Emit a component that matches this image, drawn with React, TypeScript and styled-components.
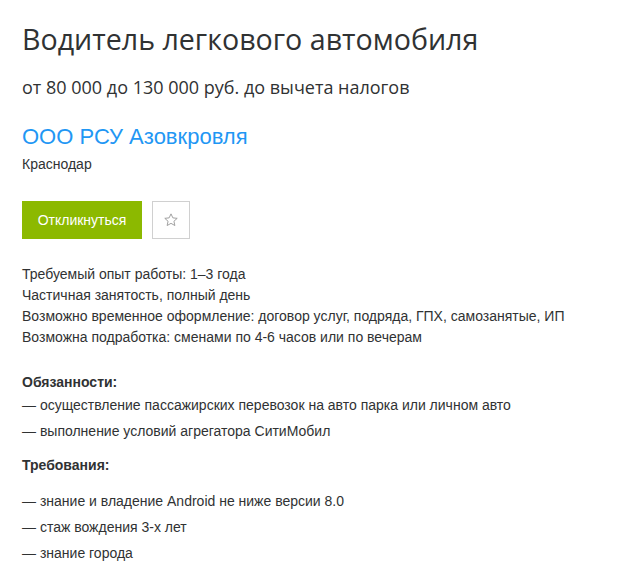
import React from "react";
import styled, { createGlobalStyle } from "styled-components";

const Global = createGlobalStyle`
  html, body { margin: 0; padding: 0; background: #fff; }
  body { font-family: "Liberation Sans", Arial, sans-serif; color: #303233; }
`;

const Page = styled.div`
  padding: 20px 22px 0 22px;
  display: flex;
  flex-direction: column;
  align-items: flex-start;
`;

const Title = styled.h1`
  margin: 0;
  font-family: "Open Sans", sans-serif;
  font-weight: 400;
  font-size: 28.6px;
  line-height: 38px;
  color: #303233;
`;

const Salary = styled.div`
  margin-top: 17px;
  font-family: "Open Sans", sans-serif;
  font-size: 18px;
  line-height: 24px;
  color: #303233;
`;

const Company = styled.a`
  margin-top: 24px;
  font-family: "Liberation Sans", Arial, sans-serif;
  font-size: 22px;
  line-height: 28px;
  color: #1f97f4;
  text-decoration: none;
`;

const City = styled.div`
  margin-top: 3px;
  font-size: 14px;
  line-height: 20px;
  color: #303233;
`;

const Actions = styled.div`
  margin-top: 27px;
  display: flex;
  gap: 10px;
`;

const RespondButton = styled.button`
  height: 38px;
  width: 120px;
  border: none;
  background: #8cb900;
  color: #fff;
  font-family: "Liberation Sans", Arial, sans-serif;
  font-size: 14px;
  padding: 0;
  cursor: pointer;
`;

const StarButton = styled.button`
  width: 38px;
  height: 38px;
  box-sizing: border-box;
  border: 1px solid #d0d0d0;
  background: #fff;
  display: flex;
  align-items: center;
  justify-content: center;
  padding: 0;
`;

const Info = styled.div`
  margin-top: 25px;
  font-size: 14px;
  line-height: 21px;
  color: #303233;
`;

const Description = styled.div`
  margin-top: 25px;
  font-size: 14px;
  color: #303233;
  display: flex;
  flex-direction: column;
  gap: 12px;
`;

const SectionTitle = styled.div<{ $gap: number }>`
  font-weight: bold;
  line-height: 19px;
  margin-bottom: ${(p) => p.$gap}px;
`;

const Item = styled.div`
  line-height: 26px;
`;

const Section = styled.div``;

const Star = () => (
  <svg width="16" height="16" viewBox="0 0 24 24" fill="none" stroke="#9a9a9a" strokeWidth="1.4" strokeLinejoin="round">
    <path d="M12 2.8l2.8 6 6.5.7-4.9 4.4 1.4 6.4L12 17l-5.8 3.3 1.4-6.4L2.7 9.5l6.5-.7z" />
  </svg>
);

export default function App() {
  return (
    <>
      <Global />
      <Page>
        <Title>Водитель легкового автомобиля</Title>
        <Salary>от 80 000 до 130 000 руб. до вычета налогов</Salary>
        <Company href="#">ООО РСУ Азовкровля</Company>
        <City>Краснодар</City>
        <Actions>
          <RespondButton>Откликнуться</RespondButton>
          <StarButton aria-label="В избранное">
            <Star />
          </StarButton>
        </Actions>
        <Info>
          <div>Требуемый опыт работы: 1–3 года</div>
          <div>Частичная занятость, полный день</div>
          <div>Возможно временное оформление: договор услуг, подряда, ГПХ, самозанятые, ИП</div>
          <div>Возможна подработка: сменами по 4-6 часов или по вечерам</div>
        </Info>
        <Description>
          <Section>
            <SectionTitle $gap={0}>Обязанности:</SectionTitle>
            <Item>— осуществление пассажирских перевозок на авто парка или личном авто</Item>
            <Item>— выполнение условий агрегатора СитиМобил</Item>
          </Section>
          <Section>
            <SectionTitle $gap={13}>Требования:</SectionTitle>
            <Item>— знание и владение Android не ниже версии 8.0</Item>
            <Item>— стаж вождения 3-х лет</Item>
            <Item>— знание города</Item>
          </Section>
        </Description>
      </Page>
    </>
  );
}
